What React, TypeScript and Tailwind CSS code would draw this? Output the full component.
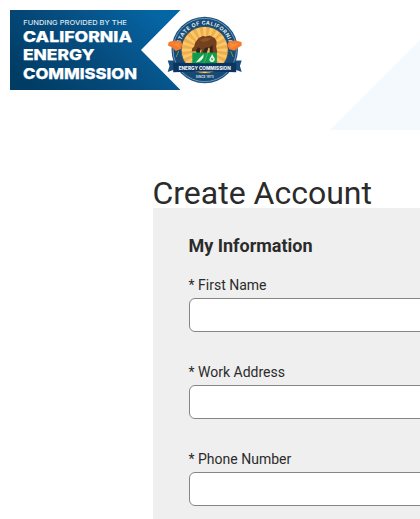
const rays = Array.from({ length: 20 }, (_, i) => i * 18);

function Seal() {
  return (
    <g transform="translate(204.7 50)">
      <circle r="33.2" fill="#1d5283" />
      <circle r="31.6" fill="none" stroke="#8fb6cb" strokeWidth="0.7" />
      <circle r="30.8" fill="#154a75" />
      <circle r="23.8" fill="#efae4c" />
      {rays.map((a) => (
        <path key={a} d="M0 0L-1.8 -23L1.8 -23Z" fill="#fbc86c" transform={`rotate(${a})`} />
      ))}
      <circle r="23.6" fill="none" stroke="#123f66" strokeWidth="0.8" />
      <path id="seal-top" d="M-25.4 0A25.4 25.4 0 0 1 25.4 0" fill="none" />
      <text fontSize="5.3" fontWeight="700" fill="#e4eef3" textAnchor="middle" fontFamily="Inter, sans-serif">
        <textPath href="#seal-top" startOffset="50%" textLength="67">STATE OF CALIFORNIA</textPath>
      </text>
      {/* bear */}
      <path
        d="M-13 1.5L-12.5 -1.5L-10.5 -3.5L-9.5 -7.5L-6 -12L-2 -14L1 -13.5L5 -14.5L10 -12L12 -8.5L11.5 -3L12.5 1.5L12 3.5L7.5 3.5L7 -1L3 -2.5L1 3.5L-4 3.5L-3 0L-6 -1.5L-9 1.2Z"
        fill="#75401d"
      />
      <path d="M-9 1L-6.5 -3L-4 -1L-5 3H-8ZM-2 3L0 -2L4 -3L2 3ZM5 -3L8 -5L8 3H5Z" fill="#35251a" />
      <path d="M-5 -10L0 -12L7 -12L3 -9L-2 -8Z" fill="#8b5527" />
      <rect x="-12.4" y="2.6" width="24.6" height="12" fill="#119c4b" />
      <path d="M-9 12.5L-5 8L-1 4.2L-1.5 8L-5 11.5ZM-8.5 12.5L-2 7L-3 10Z" fill="#f1fbef" />
      <path d="M-1 14L3 3" stroke="#65bf7c" strokeWidth="0.6" />
      <path d="M7.5 4L8.5 6.2C11.6 9.5 9.5 12 7.3 12S3.6 9.8 6 7Z" fill="#ebf8e9" />
      <path d="M7.4 7L6.2 9.5H7.3L7 11L8.8 8.7H7.6Z" fill="#119c4b" />
      {/* poppies */}
      <path d="M-36 -8L-30 -9.5L-23.5 -8.5L-22.4 -5L-24 -0.7L-29 1L-32.5 -2.6L-36.8 -4.5Z" fill="#f47b2b" />
      <path d="M-35 -7.5L-29 -6L-26 -8L-25 -2L-28 -4Z" fill="#fb8c38" />
      <path d="M24 -8.5L31 -9.5L36.8 -8L37 -4.5L33 -2L29.5 0.8L24.5 -0.8L22.6 -5Z" fill="#f47b2b" />
      <path d="M25 -8L29 -6L35 -7L29.5 -3L26 -2Z" fill="#fb8c38" />
      <path d="M-26 1L-28.5 7M26 1L28.5 7" stroke="#779343" strokeWidth="1" />
      {/* banner */}
      <path d="M-37 10.5H-30V19.5L-37 22L-35.2 16ZM37 10.5H30V19.5L37 22L35.2 16Z" fill="#194e7b" />
      <path d="M-31.5 12.6Q0 14 31.5 12.6V22.3Q0 20.5 -31.5 22.3Z" fill="#0b3560" />
      <text y="19.6" fontSize="4.6" fontWeight="800" textLength="52" lengthAdjust="spacingAndGlyphs" textAnchor="middle" fill="#f3f6f8" fontFamily="Inter, sans-serif">ENERGY COMMISSION</text>
      <text y="28.3" fontSize="3.2" fontWeight="700" textLength="18" textAnchor="middle" fill="#cadce5" fontFamily="Inter, sans-serif">SINCE 1975</text>
    </g>
  );
}

function Logo() {
  return (
    <svg className="block h-[130px] w-[260px] shrink-0" viewBox="0 0 260 130" role="img">
      <defs>
        <linearGradient id="blue" x1="0" y1="0.8" x2="1" y2="0.3">
          <stop offset="0" stopColor="#003c64" />
          <stop offset="0.5" stopColor="#064c7e" />
          <stop offset="1" stopColor="#0566a5" />
        </linearGradient>
      </defs>
      <path d="M10 10H180.5L141 50L180.5 90H10Z" fill="url(#blue)" />
      <g fill="#fff" fontFamily="Inter, sans-serif">
        <text x="23.3" y="25.4" fontSize="6.6" fontWeight="500" fill="#dce7ef" textLength="103.5" lengthAdjust="spacingAndGlyphs">FUNDING PROVIDED BY THE</text>
        <g fontSize="15" fontWeight="800" stroke="#fff" strokeWidth="0.25">
          <text x="23" y="41.7" textLength="109" lengthAdjust="spacingAndGlyphs">CALIFORNIA</text>
          <text x="23" y="60.4" textLength="71.5" lengthAdjust="spacingAndGlyphs">ENERGY</text>
          <text x="23" y="79" textLength="114" lengthAdjust="spacingAndGlyphs">COMMISSION</text>
        </g>
      </g>
      <Seal />
    </svg>
  );
}

function Field({ label }: { label: string }) {
  return (
    <label className="block h-[87px] text-sm leading-5">
      <span className="-ml-[0.5px] block h-[23px]">* {label}</span>
      <input className="block h-[34px] w-[300px] rounded-[6px] border border-[#858585] bg-white px-3 outline-none" />
    </label>
  );
}

export default function App() {
  return (
    <div className="h-[519px] w-[420px] overflow-hidden bg-white font-[Roboto,sans-serif] text-[#2b2b2b]">
      <header className="flex h-[130px] justify-between">
        <Logo />
        <svg className="block h-[130px] w-[90px] shrink-0" viewBox="0 0 90 130" aria-hidden="true">
          <path d="M0 130L90 40V130Z" fill="#f3f9fd" />
        </svg>
      </header>
      <main className="pl-[153px] pt-[43px]">
        <h1 className="-ml-[0.6px] h-[35px] whitespace-nowrap text-[32px] leading-[40px]">Create Account</h1>
        <section className="h-[311px] w-[360px] bg-[#efefef] pl-9 pt-[25px]">
          <h2 className="-ml-[0.6px] h-[42px] text-lg font-bold leading-[26px]">My Information</h2>
          <Field label="First Name" />
          <Field label="Work Address" />
          <Field label="Phone Number" />
        </section>
      </main>
    </div>
  );
}
